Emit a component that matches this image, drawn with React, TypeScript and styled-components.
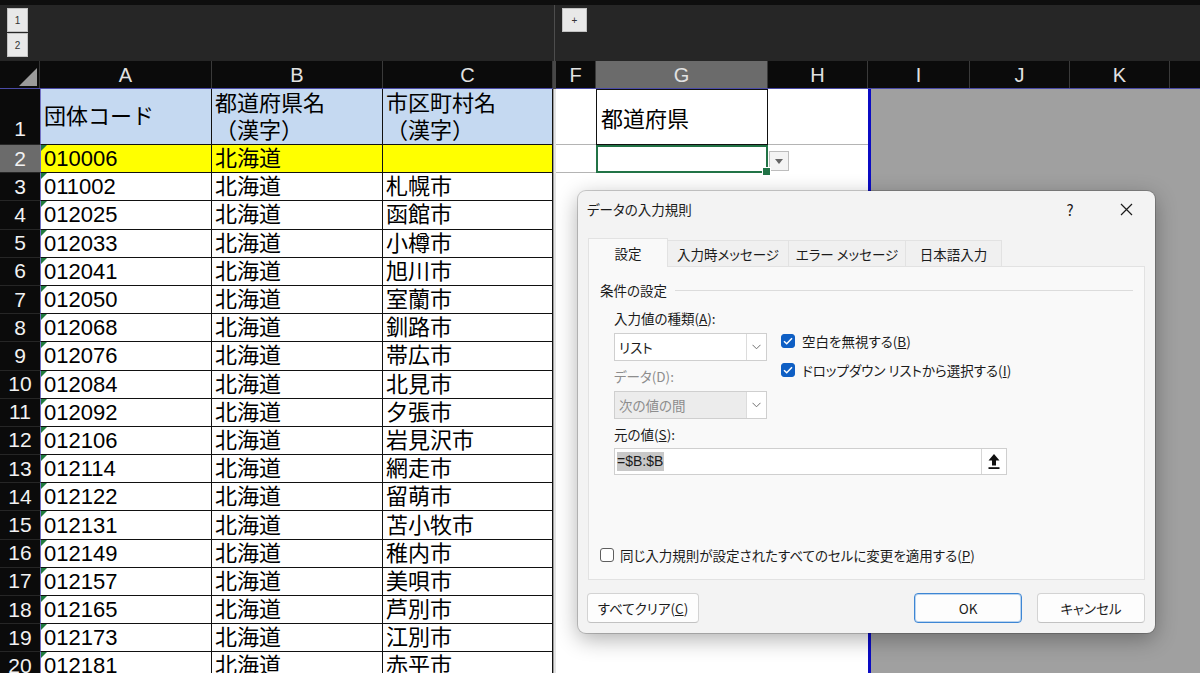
import React from 'react';
import styled, { createGlobalStyle } from 'styled-components';

const GlobalStyle = createGlobalStyle`
  * {
    box-sizing: border-box;
  }
  html,
  body {
    margin: 0;
    padding: 0;
  }
  body {
    width: 1200px;
    height: 673px;
    overflow: hidden;
    background: #a0a0a0;
    font-family: 'Liberation Sans', 'Noto Sans CJK JP', sans-serif;
  }
`;

const ROW_H = 28.2;

interface WidthProps {
  $w: number;
}

interface ActiveProps {
  $active?: boolean;
}

const Screen = styled.div`
  position: relative;
  width: 1200px;
  height: 673px;
  overflow: hidden;
  display: flex;
  flex-direction: column;
`;

/* outline bar */

const TopBar = styled.div`
  height: 61px;
  flex: none;
  display: flex;
  background: #262626;
  border-top: 5px solid #0e0e0e;
`;

const OutlineArea = styled.div<{ $w?: number }>`
  width: ${p => (p.$w ? `${p.$w}px` : 'auto')};
  flex: ${p => (p.$w ? 'none' : 1)};
  padding: 3px 0 0 7px;
  border-right: ${p => (p.$w ? '1px solid #4d4d4d' : 'none')};
`;

const LevelStack = styled.div`
  display: flex;
  flex-direction: column;
  gap: 1px;
`;

const LevelButton = styled.div<{ $w: number }>`
  width: ${p => p.$w}px;
  height: 24px;
  display: flex;
  align-items: center;
  justify-content: center;
  background: #e8e8e8;
  border: 1px solid #c2c2c2;
  color: #333;
  font-size: 10px;
`;

/* grid */

const Sheet = styled.div`
  flex: 1;
  display: flex;
  min-height: 0;
`;

const Pane = styled.div<{ $w?: number }>`
  width: ${p => (p.$w ? `${p.$w}px` : 'auto')};
  flex: ${p => (p.$w ? 'none' : 1)};
  display: flex;
  flex-direction: column;
  overflow: hidden;
`;

const Divider = styled.div`
  width: 3px;
  flex: none;
  display: flex;
  flex-direction: column;
`;

const DividerHead = styled.div`
  height: 28px;
  flex: none;
  background: #474747;
`;

const DividerBody = styled.div`
  flex: 1;
  background: #e4e4e4;
  border-left: 1px solid #9c9c9c;
`;

const HeaderRow = styled.div`
  height: 28px;
  flex: none;
  display: flex;
  background: #0b0b0b;
  border-bottom: 1px solid #4a4aa6;
`;

const Corner = styled.div`
  width: 40px;
  flex: none;
  display: flex;
  align-items: flex-end;
  justify-content: flex-end;
  padding: 0 2px 2px 0;
  border-right: 1px solid #333;
`;

const ColHead = styled.div<WidthProps & ActiveProps>`
  width: ${p => p.$w}px;
  flex: none;
  display: flex;
  align-items: center;
  justify-content: center;
  padding-top: 1px;
  background: ${p => (p.$active ? '#6b6b6b' : 'transparent')};
  border-right: 1px solid #3a3a3a;
  color: #e2e2e2;
  font-size: 20px;
`;

const Body = styled.div`
  flex: none;
  display: flex;
  flex-direction: column;
  background: #fff;
`;

const Row = styled.div<{ $h: number }>`
  height: ${p => p.$h}px;
  flex: none;
  display: flex;
`;

const RowHead = styled.div<ActiveProps & { $tall?: boolean }>`
  width: 40px;
  flex: none;
  display: flex;
  justify-content: center;
  align-items: ${p => (p.$tall ? 'flex-end' : 'center')};
  padding-bottom: ${p => (p.$tall ? '3px' : '0')};
  background: ${p => (p.$active ? '#6b6b6b' : '#0b0b0b')};
  border-bottom: 1px solid #262626;
  color: #f2f2f2;
  font-size: 21px;
`;

const Cell = styled.div<WidthProps & { $bg?: string; $first?: boolean; $mark?: boolean }>`
  position: relative;
  width: ${p => p.$w}px;
  flex: none;
  display: flex;
  align-items: center;
  padding-left: 3px;
  background: ${p => p.$bg ?? '#fff'};
  border-left: ${p => (p.$first ? '1px solid #7272c4' : 'none')};
  border-right: 1px solid #111;
  border-bottom: 1px solid #111;
  color: #000;
  font-size: 22px;
  line-height: 27px;
  white-space: pre-line;
  overflow: hidden;

  &::before {
    content: '';
    display: ${p => (p.$mark ? 'block' : 'none')};
    position: absolute;
    left: 0;
    top: 0;
    border-top: 6px solid #1f7a3e;
    border-right: 6px solid transparent;
  }
`;

/* right side */

const RightBody = styled.div`
  flex: 1;
  display: flex;
`;

const PrintArea = styled.div`
  width: 315px;
  flex: none;
  background: #fff;
  border-right: 3px solid #0b0bc4;
  display: flex;
  flex-direction: column;
`;

const GridCell = styled.div<WidthProps>`
  width: ${p => p.$w}px;
  flex: none;
  border-bottom: 1px solid #b4b4b4;
`;

const TitleCell = styled.div`
  width: 172px;
  flex: none;
  display: flex;
  align-items: center;
  padding-left: 4px;
  border: 1px solid #111;
  font-size: 22px;
  color: #000;
`;

const ActiveCell = styled.div`
  position: relative;
  width: 172px;
  flex: none;
  border: 2px solid #217346;

  &::after {
    content: '';
    position: absolute;
    right: -5px;
    bottom: -5px;
    width: 7px;
    height: 7px;
    background: #217346;
    border: 1px solid #fff;
  }
`;

const DropCell = styled.div`
  flex: 1;
  padding: 6px 0 0 1px;
`;

const DropButton = styled.div`
  width: 20px;
  height: 20px;
  display: flex;
  align-items: center;
  justify-content: center;
  background: #f4f4f4;
  border: 1px solid #bdbdbd;
`;

const Outside = styled.div`
  flex: 1;
  background: #a0a0a0;
`;

/* dialog */

const Dialog = styled.div`
  position: absolute;
  left: 578px;
  top: 191px;
  width: 577px;
  height: 442px;
  display: flex;
  flex-direction: column;
  background: #f3f3f3;
  border-radius: 8px;
  box-shadow: 0 0 0 1px rgba(0, 0, 0, 0.18), 0 6px 22px rgba(0, 0, 0, 0.32);
  font-family: 'Noto Sans CJK JP', 'Liberation Sans', sans-serif;
  font-feature-settings: 'palt';
  font-size: 13.5px;
  color: #1b1b1b;
`;

const TitleBar = styled.div`
  height: 36px;
  flex: none;
  display: flex;
  align-items: center;
  padding-left: 9px;
  padding-right: 6px;
`;

const DialogTitle = styled.div`
  flex: 1;
`;

const TitleButton = styled.div<WidthProps>`
  width: ${p => p.$w}px;
  height: 36px;
  display: flex;
  align-items: center;
  justify-content: center;
  font-size: 15px;
`;

const TabStrip = styled.div`
  height: 28px;
  flex: none;
  margin-top: 11px;
  padding-left: 10px;
  display: flex;
  align-items: flex-end;
`;

const Tab = styled.div<WidthProps & ActiveProps>`
  position: relative;
  z-index: ${p => (p.$active ? 1 : 0)};
  width: ${p => p.$w}px;
  height: ${p => (p.$active ? 29 : 26)}px;
  margin-bottom: ${p => (p.$active ? -1 : 0)}px;
  display: flex;
  align-items: center;
  justify-content: center;
  padding-bottom: ${p => (p.$active ? 1 : 0)}px;
  background: ${p => (p.$active ? '#f9f9f9' : '#f0f0f0')};
  border: 1px solid #e2e2e2;
  border-bottom: none;
  margin-right: -1px;
`;

const TabPanel = styled.div`
  height: 314px;
  flex: none;
  margin: 0 10px;
  padding: 13px 11px 14px 11px;
  display: flex;
  flex-direction: column;
  background: #f9f9f9;
  border: 1px solid #e2e2e2;
`;

const GroupHeader = styled.div`
  display: flex;
  align-items: center;
  gap: 8px;
  line-height: 20px;
`;

const GroupRule = styled.div`
  flex: 1;
  height: 1px;
  background: #dcdcdc;
`;

const GroupBody = styled.div`
  margin-top: 8px;
  padding-left: 14px;
  display: grid;
  grid-template-columns: 153px 1fr;
  column-gap: 14px;
  align-items: start;
`;

const FieldLabel = styled.div<{ $disabled?: boolean; $spaced?: boolean }>`
  grid-column: 1;
  margin-top: ${p => (p.$spaced ? 5 : 0)}px;
  line-height: 20px;
  color: ${p => (p.$disabled ? '#8d8d8d' : '#1b1b1b')};
`;

const ComboBox = styled.div<{ $disabled?: boolean }>`
  grid-column: 1;
  height: 28px;
  margin-top: 5px;
  display: flex;
  background: ${p => (p.$disabled ? '#ececec' : '#fff')};
  border: 1px solid #cfcfcf;
  color: ${p => (p.$disabled ? '#8d8d8d' : '#1b1b1b')};
`;

const ComboText = styled.div`
  flex: 1;
  padding-left: 4px;
  line-height: 26px;
`;

const ComboToggle = styled.div`
  width: 20px;
  display: flex;
  align-items: center;
  justify-content: center;
  background: #fff;
  border-left: 1px solid #dcdcdc;
`;

const CheckList = styled.div`
  grid-column: 2;
  grid-row: 2 / span 3;
  padding-top: 3px;
  display: flex;
  flex-direction: column;
  gap: 9px;
`;

const CheckRow = styled.div`
  display: flex;
  align-items: center;
  gap: 7px;
  line-height: 20px;
`;

const CheckBox = styled.div<{ $checked?: boolean }>`
  width: 14px;
  height: 14px;
  flex: none;
  display: flex;
  align-items: center;
  justify-content: center;
  border-radius: 3px;
  background: ${p => (p.$checked ? '#0f5fc4' : '#fff')};
  border: 1px solid ${p => (p.$checked ? '#0f5fc4' : '#5f5f5f')};
`;

const SourceInput = styled.div`
  grid-column: 1 / -1;
  width: 393px;
  height: 27px;
  margin-top: 4px;
  display: flex;
  align-items: center;
  background: #fff;
  border: 1px solid #cfcfcf;
`;

const Selection = styled.span`
  margin-left: 2px;
  padding-right: 1px;
  background: #c8c8c8;
  font-family: 'Liberation Sans', sans-serif;
  font-size: 14px;
  line-height: 19px;
`;

const RefButton = styled.div`
  width: 25px;
  height: 25px;
  margin-left: auto;
  display: flex;
  align-items: center;
  justify-content: center;
  border-left: 1px solid #d6d6d6;
`;

const ApplyRow = styled.div`
  margin-top: auto;
  display: flex;
  align-items: center;
  gap: 6px;
  line-height: 20px;
`;

const Footer = styled.div`
  margin-top: 13px;
  padding: 0 10px 0 9px;
  display: flex;
  gap: 15px;
`;

const Spacer = styled.div`
  flex: 1;
`;

const DialogButton = styled.div<WidthProps & { $primary?: boolean }>`
  width: ${p => p.$w}px;
  height: 30px;
  display: flex;
  align-items: center;
  justify-content: center;
  background: #fdfdfd;
  border: 1px solid ${p => (p.$primary ? '#3d86d4' : '#d3d3d3')};
  border-bottom-color: ${p => (p.$primary ? '#3d86d4' : '#c2c2c2')};
  box-shadow: ${p => (p.$primary ? 'inset 0 0 0 1px rgba(61, 134, 212, 0.35)' : 'none')};
  border-radius: 4px;
`;

const Chevron = () => (
  <svg width="9" height="6" viewBox="0 0 9 6">
    <polyline points="0.5,0.8 4.5,4.8 8.5,0.8" fill="none" stroke="#707070" strokeWidth="1" />
  </svg>
);

const Check = () => (
  <svg width="10" height="8" viewBox="0 0 10 8">
    <polyline points="1,4.2 3.7,6.8 9,1.2" fill="none" stroke="#fff" strokeWidth="1.5" />
  </svg>
);

const rows: [string, string][] = [
  ['011002', '札幌市'],
  ['012025', '函館市'],
  ['012033', '小樽市'],
  ['012041', '旭川市'],
  ['012050', '室蘭市'],
  ['012068', '釧路市'],
  ['012076', '帯広市'],
  ['012084', '北見市'],
  ['012092', '夕張市'],
  ['012106', '岩見沢市'],
  ['012114', '網走市'],
  ['012122', '留萌市'],
  ['012131', '苫小牧市'],
  ['012149', '稚内市'],
  ['012157', '美唄市'],
  ['012165', '芦別市'],
  ['012173', '江別市'],
  ['012181', '赤平市']
];

const rightCols: [string, number][] = [
  ['F', 40],
  ['G', 172],
  ['H', 100],
  ['I', 102],
  ['J', 100],
  ['K', 100],
  ['', 100]
];

const tabs: [string, number][] = [
  ['設定', 80],
  ['入力時メッセージ', 122],
  ['エラー メッセージ', 118],
  ['日本語入力', 97]
];

export default function App() {
  return (
    <Screen>
      <GlobalStyle />
      <TopBar>
        <OutlineArea $w={555}>
          <LevelStack>
            <LevelButton $w={21}>1</LevelButton>
            <LevelButton $w={21}>2</LevelButton>
          </LevelStack>
        </OutlineArea>
        <OutlineArea>
          <LevelButton $w={25}>+</LevelButton>
        </OutlineArea>
      </TopBar>

      <Sheet>
        <Pane $w={553}>
          <HeaderRow>
            <Corner>
              <svg width="18" height="18" viewBox="0 0 18 18">
                <polygon points="18,0 18,18 0,18" fill="#9a9a9a" />
              </svg>
            </Corner>
            <ColHead $w={172}>A</ColHead>
            <ColHead $w={171}>B</ColHead>
            <ColHead $w={170}>C</ColHead>
          </HeaderRow>
          <Body>
            <Row $h={56}>
              <RowHead $tall>1</RowHead>
              <Cell $w={172} $bg="#c5d9f1" $first>
                団体コード
              </Cell>
              <Cell $w={171} $bg="#c5d9f1">
                {'都道府県名\n（漢字）'}
              </Cell>
              <Cell $w={170} $bg="#c5d9f1">
                {'市区町村名\n（漢字）'}
              </Cell>
            </Row>
            <Row $h={ROW_H}>
              <RowHead $active>2</RowHead>
              <Cell $w={172} $bg="#ffff00" $first $mark>
                010006
              </Cell>
              <Cell $w={171} $bg="#ffff00">
                北海道
              </Cell>
              <Cell $w={170} $bg="#ffff00" />
            </Row>
            {rows.map(([code, city], i) => (
              <Row $h={ROW_H} key={code}>
                <RowHead>{i + 3}</RowHead>
                <Cell $w={172} $first $mark>
                  {code}
                </Cell>
                <Cell $w={171}>北海道</Cell>
                <Cell $w={170}>{city}</Cell>
              </Row>
            ))}
          </Body>
        </Pane>

        <Divider>
          <DividerHead />
          <DividerBody />
        </Divider>

        <Pane>
          <HeaderRow>
            {rightCols.map(([name, w]) => (
              <ColHead key={name || 'L'} $w={w} $active={name === 'G'}>
                {name}
              </ColHead>
            ))}
          </HeaderRow>
          <RightBody>
            <PrintArea>
              <Row $h={56}>
                <GridCell $w={40} />
                <TitleCell>都道府県</TitleCell>
                <GridCell $w={100} />
              </Row>
              <Row $h={ROW_H}>
                <GridCell $w={40} />
                <ActiveCell />
                <DropCell>
                  <DropButton>
                    <svg width="8" height="5" viewBox="0 0 8 5">
                      <polygon points="0,0 8,0 4,5" fill="#666" />
                    </svg>
                  </DropButton>
                </DropCell>
              </Row>
            </PrintArea>
            <Outside />
          </RightBody>
        </Pane>
      </Sheet>

      <Dialog>
        <TitleBar>
          <DialogTitle>データの入力規則</DialogTitle>
          <TitleButton $w={66}>?</TitleButton>
          <TitleButton $w={46}>
            <svg width="13" height="13" viewBox="0 0 13 13">
              <path d="M1 1 L12 12 M12 1 L1 12" stroke="#1b1b1b" strokeWidth="1.2" />
            </svg>
          </TitleButton>
        </TitleBar>

        <TabStrip>
          {tabs.map(([label, w], i) => (
            <Tab key={label} $w={w} $active={i === 0}>
              {label}
            </Tab>
          ))}
        </TabStrip>

        <TabPanel>
          <GroupHeader>
            条件の設定
            <GroupRule />
          </GroupHeader>
          <GroupBody>
            <FieldLabel>
              入力値の種類(<u>A</u>):
            </FieldLabel>
            <ComboBox>
              <ComboText>リスト</ComboText>
              <ComboToggle>
                <Chevron />
              </ComboToggle>
            </ComboBox>
            <CheckList>
              <CheckRow>
                <CheckBox $checked>
                  <Check />
                </CheckBox>
                <span>
                  空白を無視する(<u>B</u>)
                </span>
              </CheckRow>
              <CheckRow>
                <CheckBox $checked>
                  <Check />
                </CheckBox>
                <span>
                  ドロップダウン リストから選択する(<u>I</u>)
                </span>
              </CheckRow>
            </CheckList>
            <FieldLabel $disabled $spaced>
              データ(D):
            </FieldLabel>
            <ComboBox $disabled>
              <ComboText>次の値の間</ComboText>
              <ComboToggle>
                <Chevron />
              </ComboToggle>
            </ComboBox>
            <FieldLabel $spaced>
              元の値(<u>S</u>):
            </FieldLabel>
            <SourceInput>
              <Selection>=$B:$B</Selection>
              <RefButton>
                <svg width="12" height="17" viewBox="0 0 12 17">
                  <polygon points="6,1 11.5,7.5 8,7.5 8,12.5 4,12.5 4,7.5 0.5,7.5" fill="#111" />
                  <rect x="0.5" y="14.2" width="11" height="1.8" fill="#111" />
                </svg>
              </RefButton>
            </SourceInput>
          </GroupBody>
          <ApplyRow>
            <CheckBox />
            <span>
              同じ入力規則が設定されたすべてのセルに変更を適用する(<u>P</u>)
            </span>
          </ApplyRow>
        </TabPanel>

        <Footer>
          <DialogButton $w={112}>
            すべてクリア(<u>C</u>)
          </DialogButton>
          <Spacer />
          <DialogButton $w={108} $primary>
            OK
          </DialogButton>
          <DialogButton $w={108}>キャンセル</DialogButton>
        </Footer>
      </Dialog>
    </Screen>
  );
}
